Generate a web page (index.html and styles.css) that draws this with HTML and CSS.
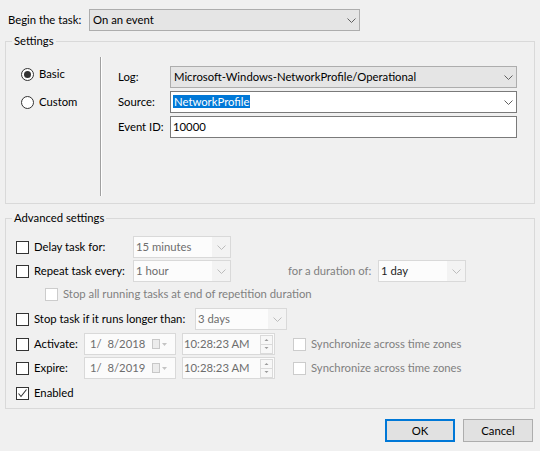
FILE: index.html
```html
<!DOCTYPE html>
<html>
<head>
<meta charset="utf-8">
<link rel="stylesheet" href="styles.css">
</head>
<body>
<div class="dialog">
  <div class="begin-row">
    <span class="begin-label">Begin the task:</span>
    <div class="combo ro begin-combo">
      <span class="combo-text">On an event</span>
      <span class="chev-area"><svg class="chev" width="9" height="5" viewBox="0 0 9 5"><path d="M0.5 0.5 L4.5 4.5 L8.5 0.5" fill="none" stroke="currentColor"/></svg></span>
    </div>
  </div>

  <fieldset class="group settings">
    <legend>Settings</legend>
    <div class="settings-body">
      <div class="radios">
        <div class="radio-row"><span class="radio on"></span><span>Basic</span></div>
        <div class="radio-row"><span class="radio"></span><span>Custom</span></div>
      </div>
      <div class="vsep"></div>
      <div class="fields">
        <div class="field-row">
          <span class="field-label">Log:</span>
          <div class="combo ro field-combo">
            <span class="combo-text">Microsoft-Windows-NetworkProfile/Operational</span>
            <span class="chev-area"><svg class="chev" width="9" height="5" viewBox="0 0 9 5"><path d="M0.5 0.5 L4.5 4.5 L8.5 0.5" fill="none" stroke="currentColor"/></svg></span>
          </div>
        </div>
        <div class="field-row">
          <span class="field-label">Source:</span>
          <div class="combo edit field-combo">
            <span class="combo-text tight"><span class="sel">NetworkProfile</span></span>
            <span class="chev-area"><svg class="chev" width="9" height="5" viewBox="0 0 9 5"><path d="M0.5 0.5 L4.5 4.5 L8.5 0.5" fill="none" stroke="currentColor"/></svg></span>
          </div>
        </div>
        <div class="field-row">
          <span class="field-label">Event ID:</span>
          <div class="combo edit field-combo">
            <span class="combo-text tight">10000</span>
          </div>
        </div>
      </div>
    </div>
  </fieldset>

  <fieldset class="group advanced">
    <legend>Advanced settings</legend>
    <div class="adv-body">
      <div class="adv-row r-delay">
        <span class="check"></span>
        <span class="adv-label w-delay">Delay task for:</span>
        <div class="combo dis w98">
          <span class="combo-text">15 minutes</span>
          <span class="chev-area"><svg class="chev" width="9" height="5" viewBox="0 0 9 5"><path d="M0.5 0.5 L4.5 4.5 L8.5 0.5" fill="none" stroke="currentColor"/></svg></span>
        </div>
      </div>
      <div class="adv-row r-repeat">
        <span class="check"></span>
        <span class="adv-label w-delay">Repeat task every:</span>
        <div class="combo dis w98">
          <span class="combo-text">1 hour</span>
          <span class="chev-area"><svg class="chev" width="9" height="5" viewBox="0 0 9 5"><path d="M0.5 0.5 L4.5 4.5 L8.5 0.5" fill="none" stroke="currentColor"/></svg></span>
        </div>
        <span class="muted dur-label">for a duration of:</span>
        <div class="combo dis dark w88">
          <span class="combo-text">1 day</span>
          <span class="chev-area"><svg class="chev" width="9" height="5" viewBox="0 0 9 5"><path d="M0.5 0.5 L4.5 4.5 L8.5 0.5" fill="none" stroke="currentColor"/></svg></span>
        </div>
      </div>
      <div class="adv-row r-stopall">
        <span class="check dis indent"></span>
        <span class="muted">Stop all running tasks at end of repetition duration</span>
      </div>
      <div class="adv-row r-stop">
        <span class="check"></span>
        <span class="adv-label w-stop">Stop task if it runs longer than:</span>
        <div class="combo dis w92">
          <span class="combo-text">3 days</span>
          <span class="chev-area"><svg class="chev" width="9" height="5" viewBox="0 0 9 5"><path d="M0.5 0.5 L4.5 4.5 L8.5 0.5" fill="none" stroke="currentColor"/></svg></span>
        </div>
      </div>
      <div class="adv-row r-activate">
        <span class="check"></span>
        <span class="adv-label w-act">Activate:</span>
        <div class="datebox">
          <span class="date-text">1/  8/2018</span>
          <svg class="cal" width="15" height="11" viewBox="0 0 15 11"><rect x="0.5" y="0.5" width="7" height="9" fill="#ececec" stroke="#c8c8c8"/><path d="M10 4 H15 L12.5 7 Z" fill="#c4c4c4"/></svg>
        </div>
        <div class="timebox">
          <span class="time-text">10:28:23 AM</span>
          <svg class="spin" width="13" height="19" viewBox="0 0 13 19"><rect x="0.5" y="0.5" width="12" height="18" fill="#f7f7f7" stroke="#dadada"/><line x1="1" y1="9.5" x2="12" y2="9.5" stroke="#dadada"/><path d="M4.5 6 H8.5 L6.5 4 Z" fill="#9a9a9a"/><path d="M4.5 12 H8.5 L6.5 14 Z" fill="#9a9a9a"/></svg>
        </div>
        <span class="check dis sync"></span>
        <span class="muted">Synchronize across time zones</span>
      </div>
      <div class="adv-row r-expire">
        <span class="check"></span>
        <span class="adv-label w-act">Expire:</span>
        <div class="datebox">
          <span class="date-text">1/  8/2019</span>
          <svg class="cal" width="15" height="11" viewBox="0 0 15 11"><rect x="0.5" y="0.5" width="7" height="9" fill="#ececec" stroke="#c8c8c8"/><path d="M10 4 H15 L12.5 7 Z" fill="#c4c4c4"/></svg>
        </div>
        <div class="timebox">
          <span class="time-text">10:28:23 AM</span>
          <svg class="spin" width="13" height="19" viewBox="0 0 13 19"><rect x="0.5" y="0.5" width="12" height="18" fill="#f7f7f7" stroke="#dadada"/><line x1="1" y1="9.5" x2="12" y2="9.5" stroke="#dadada"/><path d="M4.5 6 H8.5 L6.5 4 Z" fill="#9a9a9a"/><path d="M4.5 12 H8.5 L6.5 14 Z" fill="#9a9a9a"/></svg>
        </div>
        <span class="check dis sync"></span>
        <span class="muted">Synchronize across time zones</span>
      </div>
      <div class="adv-row r-enabled">
        <span class="check checked"><svg width="11" height="11" viewBox="0 0 11 11"><path d="M1.5 5.5 L4 8.5 L9.5 1.5" fill="none" stroke="#333" stroke-width="1.1"/></svg></span>
        <span>Enabled</span>
      </div>
    </div>
  </fieldset>

  <div class="buttons">
    <button class="btn default">OK</button>
    <button class="btn">Cancel</button>
  </div>
</div>
</body>
</html>
```

FILE: styles.css
```css
* { box-sizing: border-box; }
html, body { margin: 0; padding: 0; }
body {
  width: 540px;
  height: 451px;
  overflow: hidden;
  background: #f0f0f0;
  color: #000;
  font-family: "Lato", "Noto Sans", sans-serif;
  font-size: 11.3px;
  line-height: 16px;
}
.dialog { padding: 9px 5px 0 5px; }

/* top row */
.begin-row { display: flex; align-items: center; padding-left: 3px; }
.begin-label { width: 81px; }
.begin-combo { width: 271px; }

/* combos */
.combo {
  display: flex;
  align-items: center;
  height: 22px;
  border: 1px solid #adadad;
  background: #e5e5e5;
  color: #000;
}
.combo-text {
  flex: 1;
  padding-left: 3px;
  white-space: pre;
  overflow: hidden;
}
.combo-text.tight { padding-left: 2px; }
.chev-area {
  width: 16px;
  align-self: stretch;
  display: flex;
  align-items: center;
  justify-content: center;
  color: #606060;
}
.chev { display: block; }
.combo.edit { background: #fff; border-color: #7a7a7a; }
.combo.dis {
  background: #fcfcfc;
  border-color: #d9d9d9;
  color: #6d6d6d;
}
.combo.dis .combo-text { padding-left: 2px; }
.combo.dis .chev-area { color: #bcbcbc; background: #f3f3f3; width: 18px; }
.combo.dis.dark { color: #1e1e1e; }
.sel {
  background: #0078d7;
  color: #fff;
  padding: 0 1px;
}
.w98 { width: 98px; }
.w88 { width: 88px; }
.w92 { width: 92px; }

/* group boxes */
.group {
  margin: 0;
  padding: 0;
  border: 1px solid #d9d9d9;
  min-width: 0;
}
.group legend {
  padding: 0 2px;
  margin-left: 6px;
  line-height: 16px;
}
.settings { margin-top: 2px; }
.advanced { margin-top: 6px; }

.settings-body { display: flex; height: 154px; }
.radios { width: 94px; padding: 17px 0 0 15px; }
.radio-row { display: flex; align-items: center; height: 16px; margin-bottom: 12px; }
.radio {
  width: 13px;
  height: 13px;
  border: 1px solid #333;
  border-radius: 50%;
  background: #fff;
  margin-right: 5px;
  display: flex;
  align-items: center;
  justify-content: center;
}
.radio.on::after {
  content: "";
  width: 7px;
  height: 7px;
  border-radius: 50%;
  background: #333;
}
.vsep {
  width: 2px;
  margin: 8px 0 7px 0;
  border-left: 1px solid #a0a0a0;
  border-right: 1px solid #fff;
}
.fields { flex: 1; padding: 17px 17px 0 16px; display: flex; flex-direction: column; gap: 3px; }
.field-row { display: flex; align-items: center; }
.field-label { width: 52px; }
.field-combo { flex: 1; }

/* advanced */
.adv-body { height: 182px; padding: 10px 0 0 10px; display: flex; flex-direction: column; }
.adv-row { display: flex; align-items: center; }
.r-delay, .r-repeat, .r-stop, .r-activate, .r-expire { height: 22px; }
.r-stopall, .r-enabled { height: 16px; }
.r-repeat { margin-top: 2px; }
.r-stopall { margin-top: 4px; }
.r-stop { margin-top: 6px; }
.r-activate { margin-top: 3px; }
.r-expire { margin-top: 2px; }
.r-enabled { margin-top: 6px; }

.check {
  width: 13px;
  height: 13px;
  border: 1px solid #333;
  background: #fff;
  margin-right: 5px;
  flex: none;
  display: flex;
  align-items: center;
  justify-content: center;
}
.check.dis { border-color: #cccccc; }
.check.indent { margin-left: 29px; }
.check.sync { margin-left: 18px; }
.check svg { display: block; }

.adv-label { flex: none; }
.w-delay { width: 99px; }
.w-stop { width: 161px; }
.w-act { width: 50px; }
.muted { color: #808080; white-space: nowrap; }
.dur-label { margin-left: 57px; width: 90px; }

.datebox, .timebox {
  height: 22px;
  border: 1px solid #d9d9d9;
  background: #fbfbfb;
  color: #6d6d6d;
  display: flex;
  align-items: center;
}
.datebox { width: 92px; padding: 0 8px 0 5px; margin-right: 6px; }
.date-text { flex: 1; white-space: pre; }
.cal { display: block; }
.timebox { width: 93px; padding: 0 1px 0 1px; }
.time-text { flex: 1; white-space: pre; }
.spin { display: block; }

/* buttons */
.buttons {
  display: flex;
  justify-content: flex-end;
  gap: 8px;
  margin: 10px 2px 0 0;
}
.btn {
  width: 70px;
  height: 23px;
  border: 1px solid #adadad;
  background: #e1e1e1;
  font-family: inherit;
  font-size: 11.3px;
  color: #000;
  padding: 0;
}
.btn.default {
  border-color: #0078d7;
  box-shadow: inset 0 0 0 1px #0078d7;
}
```
